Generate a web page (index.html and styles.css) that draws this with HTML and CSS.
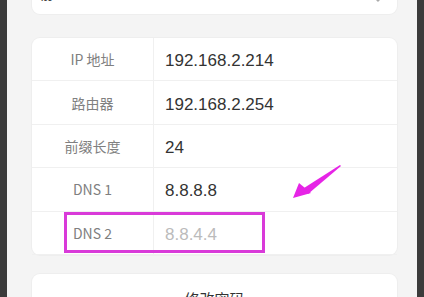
FILE: index.html
```html
<!DOCTYPE html>
<html>
<head>
	<title>网络设置</title>
	<link rel="stylesheet" href="styles.css">
</head>
<body>
	<div class="edge"></div>
	<div class="page">
		<div class="card mode">
			<span class="mode-text">静态</span>
			<svg class="chevron" width="10" height="6" viewBox="0 0 10 6"><path d="M1 1 L5 5 L9 1" fill="none" stroke="#aaa" stroke-width="1.4"/></svg>
		</div>

		<div class="card table">
			<div class="row"><div class="label">IP 地址</div><div class="value">192.168.2.214</div></div>
			<div class="row"><div class="label">路由器</div><div class="value">192.168.2.254</div></div>
			<div class="row"><div class="label">前缀长度</div><div class="value">24</div></div>
			<div class="row"><div class="label">DNS 1</div><div class="value">8.8.8.8</div></div>
			<div class="row"><div class="label">DNS 2</div><div class="value muted">8.8.4.4</div></div>

			<!-- annotation marks -->
			<div class="mark-box"></div>
			<svg class="mark-arrow" width="52" height="36" viewBox="0 0 52 36">
				<polygon points="50,1 14,24 18,30 51,2" fill="#e624e6"/>
				<polygon points="3,34 9,19 21,29" fill="#e624e6"/>
			</svg>
		</div>

		<div class="card action">修改密码</div>
	</div>
	<div class="edge"></div>
</body>
</html>
```

FILE: styles.css
```css
body {
	margin: 0;
	display: flex;
	height: 297px;
	overflow: hidden;
	font-family: "Noto Sans CJK SC", "Noto Sans", sans-serif;
	background: #f4f4f4;
}

.edge {
	width: 7px;
	flex-shrink: 0;
	background: #3b3b3b;
}

.page {
	flex: 1;
	padding: 0 20px 0 25px;
	background: #f4f4f4;
}

.card {
	background: #fff;
	border-radius: 8px;
	box-shadow: 0 0 0 1px #eeeeee;
}

.mode {
	height: 44px;
	margin-top: -30px;
	position: relative;
}

.mode-text {
	position: absolute;
	left: 8px;
	top: 10px;
	font-size: 16px;
	color: #444;
}

.chevron {
	position: absolute;
	right: 14px;
	top: 26px;
}

.table {
	margin-top: 24px;
	position: relative;
}

.row {
	display: flex;
	height: 43.4px;
	border-bottom: 1px solid #f0f0f0;
	box-sizing: border-box;
}

.row:last-of-type {
	border-bottom: none;
}

.label {
	width: 121px;
	border-right: 1px solid #f0f0f0;
	display: flex;
	align-items: center;
	justify-content: center;
	font-size: 14px;
	color: #808080;
}

.value {
	display: flex;
	align-items: center;
	padding: 4px 0 0 11px;
	font-family: "Liberation Sans", "Noto Sans CJK SC", sans-serif;
	font-size: 17px;
	color: #333;
}

.value.muted {
	color: #bbb;
}

.mark-box {
	position: absolute;
	left: 32px;
	top: 174px;
	width: 201px;
	height: 41px;
	border: 3px solid #d93ad9;
	box-sizing: border-box;
}

.mark-arrow {
	position: absolute;
	left: 258px;
	top: 126px;
}

.action {
	margin-top: 19px;
	height: 50px;
	text-align: center;
	padding-top: 14px;
	box-sizing: border-box;
	font-size: 15px;
	color: #333;
}
```
